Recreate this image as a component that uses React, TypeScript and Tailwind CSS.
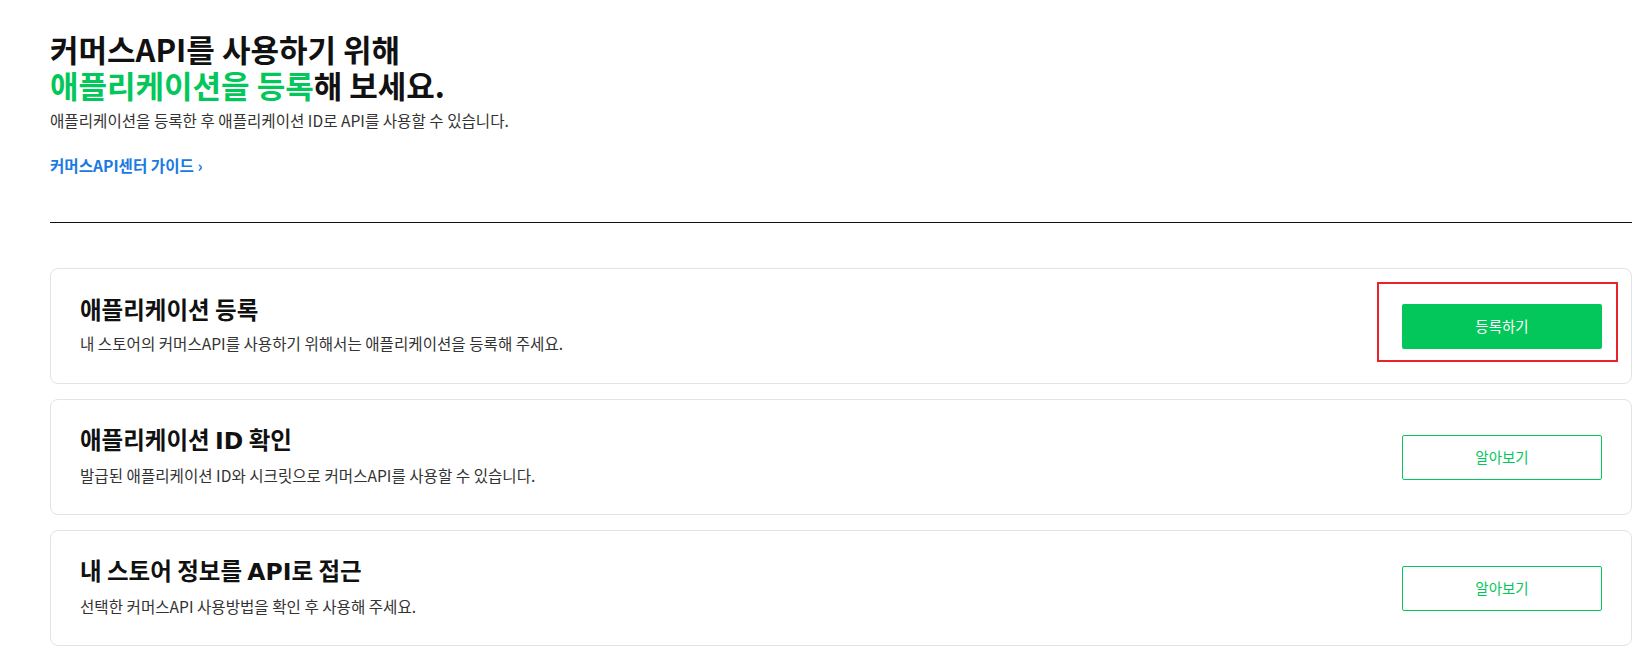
const font = { fontFamily: '"Noto Sans CJK KR", "Noto Sans", sans-serif' };

type Item = {
  title: React.ReactNode;
  desc: string;
  action: string;
  primary?: boolean;
};

const items: Item[] = [
  {
    title: "애플리케이션 등록",
    desc: "내 스토어의 커머스API를 사용하기 위해서는 애플리케이션을 등록해 주세요.",
    action: "등록하기",
    primary: true,
  },
  {
    title: (
      <>
        애플리케이션 <span className="font-['DejaVu_Sans'] font-bold">ID</span> 확인
      </>
    ),
    desc: "발급된 애플리케이션 ID와 시크릿으로 커머스API를 사용할 수 있습니다.",
    action: "알아보기",
  },
  {
    title: (
      <>
        내 스토어 정보를 <span className="font-['DejaVu_Sans'] font-bold">API</span>로 접근
      </>
    ),
    desc: "선택한 커머스API 사용방법을 확인 후 사용해 주세요.",
    action: "알아보기",
  },
];

function ItemCard({ item }: { item: Item }) {
  return (
    <div className="flex h-[116px] items-center justify-between rounded-lg border border-[#e3e3e3] bg-white pl-[29px] pr-[29px]">
      <div className="pb-[4px]">
        <h3 className="text-[23.5px] font-bold leading-[30px] text-[#111]">{item.title}</h3>
        <p className="mt-[8px] text-[15.6px] leading-[22px] text-[#333]">{item.desc}</p>
      </div>
      {item.primary ? (
        <div className="relative">
          <button className="h-[45px] w-[200px] rounded-[2px] bg-[#03c75a] text-[14.5px] text-white">
            {item.action}
          </button>
          <span className="pointer-events-none absolute -bottom-[13px] -left-[25px] -right-[16px] -top-[22px] border-2 border-[#e8232b]" />
        </div>
      ) : (
        <button className="h-[45px] w-[200px] rounded-[2px] border border-[#03c75a] bg-white text-[14.5px] text-[#03c75a]">
          {item.action}
        </button>
      )}
    </div>
  );
}

export default function App() {
  return (
    <div className="min-h-[659px] bg-white pl-[50px] pr-[10px] pt-[31px]" style={font}>
      <h1 className="text-[31px] font-bold leading-[36px] text-[#111]">
        커머스API를 사용하기 위해
        <br />
        <span className="text-[#03c75a]">애플리케이션을 등록</span>해 보세요.
      </h1>
      <p className="mt-[6px] text-[15.6px] leading-[22px] text-[#333]">
        애플리케이션을 등록한 후 애플리케이션 ID로 API를 사용할 수 있습니다.
      </p>
      <a href="#" className="mt-[23px] inline-block text-[15.6px] font-bold leading-[22px] text-[#1a7ae0]">
        커머스API센터 가이드 ›
      </a>
      <div className="mt-[45px] border-t border-[#111]" />
      <div className="mt-[45px] flex flex-col gap-[15px]">
        {items.map((item, i) => (
          <ItemCard key={i} item={item} />
        ))}
      </div>
    </div>
  );
}
